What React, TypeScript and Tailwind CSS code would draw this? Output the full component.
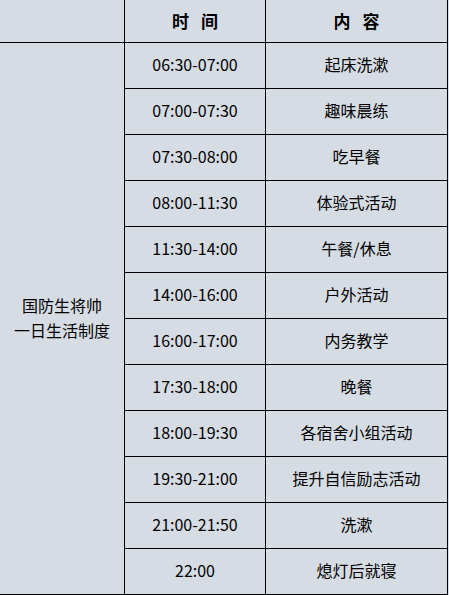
import React from "react";

const rows = [
  { time: "06:30-07:00", content: "起床洗漱" },
  { time: "07:00-07:30", content: "趣味晨练" },
  { time: "07:30-08:00", content: "吃早餐" },
  { time: "08:00-11:30", content: "体验式活动" },
  { time: "11:30-14:00", content: "午餐/休息" },
  { time: "14:00-16:00", content: "户外活动" },
  { time: "16:00-17:00", content: "内务教学" },
  { time: "17:30-18:00", content: "晚餐" },
  { time: "18:00-19:30", content: "各宿舍小组活动" },
  { time: "19:30-21:00", content: "提升自信励志活动" },
  { time: "21:00-21:50", content: "洗漱" },
  { time: "22:00", content: "熄灯后就寝" },
];

const cell = "flex items-center justify-center border-r border-b border-black";

export default function App() {
  return (
    <div
      className="w-[449px] h-[595px] bg-[#d6dce4] text-black"
      style={{ fontFamily: '"Noto Sans CJK SC", "Noto Sans", sans-serif' }}
    >
      <div className="grid grid-cols-[125px_141px_182px] grid-rows-[43px_repeat(12,46px)] text-[16px]">
        {/* header */}
        <div className={cell} />
        <div className={`${cell} gap-3 text-[17px] font-bold`}>
          <span>时</span>
          <span>间</span>
        </div>
        <div className={`${cell} gap-3 text-[17px] font-bold`}>
          <span>内</span>
          <span>容</span>
        </div>

        {rows.map((row, index) => (
          <React.Fragment key={index}>
            {index === 0 && (
              <div className={`${cell} row-span-12 flex-col leading-[25px] pb-px`}>
                <span>国防生将帅</span>
                <span>一日生活制度</span>
              </div>
            )}
            <div className={`${cell} pb-[3px]`}>{row.time}</div>
            <div className={`${cell} pb-[3px]`}>{row.content}</div>
          </React.Fragment>
        ))}
      </div>
    </div>
  );
}
